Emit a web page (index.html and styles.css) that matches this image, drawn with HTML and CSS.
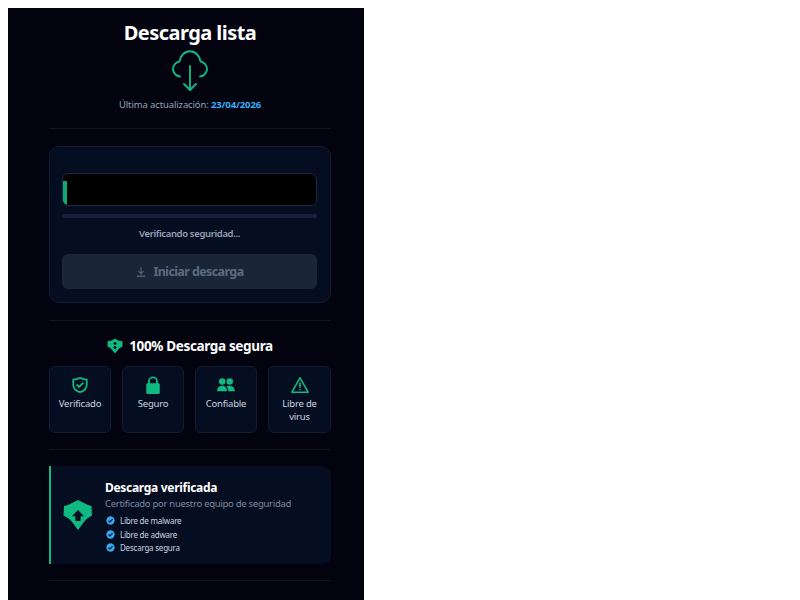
FILE: index.html
```html
<!DOCTYPE html>
<html lang="es">
<head>
    <meta charset="UTF-8">
    <meta name="viewport" content="width=device-width, initial-scale=1.0">
    <title>Descarga lista</title>
    <link rel="stylesheet" href="styles.css">
</head>
<body>

<div class="container">
    <h1>Descarga lista</h1>
    <svg class="cloud-icon" viewBox="0 0 36 42" fill="none" stroke="#10b981" stroke-width="1.9" stroke-linecap="round" stroke-linejoin="round">
        <path d="M8 26.500C4 26 1 22.800 1 19c0-3.800 2.800-7 6.500-7.500C8.200 5.800 12.600 1.200 18 1.200s9.800 4.600 10.500 10.300C32.200 12 35 15.200 35 19c0 3.800-3 7-7 7.500"/>
        <path d="M18 16v24"/>
        <path d="M12 34l6 6 6-6"/>
    </svg>
    <p class="updated">Última actualización: <strong>23/04/2026</strong></p>

    <hr>

    <div class="download-card">
        <div class="ad-box">
            <div class="ad-fill"></div>
        </div>
        <div class="track"></div>
        <p class="status">Verificando seguridad...</p>
        <button class="start-btn" disabled>
            <svg viewBox="0 0 16 16" fill="none" stroke="#5d6b82" stroke-width="1.4" stroke-linecap="round" stroke-linejoin="round">
                <path d="M8 2v8"/>
                <path d="M4.800 7 8 10.200 11.200 7"/>
                <path d="M3 13.500h10"/>
            </svg>
            Iniciar descarga
        </button>
    </div>

    <hr class="card-end">

    <h2 class="safe-title">
        <svg viewBox="0 0 30 30">
            <path fill="#10b981" d="M15 1l6 3.500 8 1.500v10c-3.500 2-5 3-7 4.500L15 29l-7-8.500C6 19 4.500 18 1 16V6l8-1.500z"/>
            <circle fill="#02030f" cx="15" cy="10.500" r="2.600"/>
            <circle fill="#02030f" cx="15" cy="18" r="2.600"/>
        </svg>
        100% Descarga segura
    </h2>

    <div class="badges">
        <div class="badge">
            <svg viewBox="0 0 20 20" fill="none" stroke="#10b981" stroke-width="2" stroke-linecap="round" stroke-linejoin="round">
                <path d="M10 2c2.200 1.300 4.600 2 7.500 2.100v5.500c0 3.800-2.900 6.800-7.500 8.400-4.600-1.600-7.500-4.600-7.500-8.400V4.100C5.400 4 7.800 3.300 10 2z"/>
                <path d="M6.800 10l2.300 2.200 4.100-4.200"/>
            </svg>
            <span>Verificado</span>
        </div>
        <div class="badge">
            <svg viewBox="0 0 20 20">
                <path fill="none" stroke="#10b981" stroke-width="2" d="M5.500 9V6a4.500 4.500 0 0 1 9 0v3"/>
                <rect fill="#10b981" x="2.500" y="8" width="15" height="12" rx="1.500"/>
            </svg>
            <span>Seguro</span>
        </div>
        <div class="badge">
            <svg viewBox="0 0 20 20" fill="#10b981">
                <circle cx="5.800" cy="6" r="3.600"/>
                <circle cx="14.200" cy="6" r="3.600"/>
                <path d="M0 17c0-4 2.400-6.300 5.800-6.300 3.200 0 5.400 2.300 5.400 6.300z"/>
                <path d="M12.500 17c0-2.400-.6-4.400-1.800-5.700.9-.4 2-.6 3.200-.6 3.400 0 6.100 2.300 6.100 6.300z"/>
            </svg>
            <span>Confiable</span>
        </div>
        <div class="badge">
            <svg viewBox="0 0 20 20" fill="none" stroke="#10b981" stroke-width="1.800" stroke-linejoin="round" stroke-linecap="round">
                <path d="M10 2 19 18H1z"/>
                <path d="M10 8v4.500"/>
                <path d="M10 15v.1"/>
            </svg>
            <span>Libre de virus</span>
        </div>
    </div>

    <hr class="badges-end">

    <div class="verified-card">
        <svg class="verified-icon" viewBox="0 0 30 30">
            <path fill="#10b981" d="M15 0l10 5 3.500 1 .5 9.500c-3.500 2-6 3.500-8 6.500L15 30 9 22c-2-3-4.500-4.500-8.500-6.500L1 6l4-1z"/>
            <path fill="#050d20" d="M15 10l6 6.200h-3.400V21h-5.200v-4.800H9z"/>
        </svg>
        <div class="verified-text">
            <h3>Descarga verificada</h3>
            <p>Certificado por nuestro equipo de seguridad</p>
            <ul>
                <li><svg viewBox="0 0 10 10"><circle cx="5" cy="5" r="4.600" fill="#38a7ee"/><path d="M2.800 5.100l1.600 1.500 2.900-3" fill="none" stroke="#050d20" stroke-width="1.200"/></svg>Libre de malware</li>
                <li><svg viewBox="0 0 10 10"><circle cx="5" cy="5" r="4.600" fill="#38a7ee"/><path d="M2.800 5.100l1.600 1.500 2.900-3" fill="none" stroke="#050d20" stroke-width="1.200"/></svg>Libre de adware</li>
                <li><svg viewBox="0 0 10 10"><circle cx="5" cy="5" r="4.600" fill="#38a7ee"/><path d="M2.800 5.100l1.600 1.500 2.900-3" fill="none" stroke="#050d20" stroke-width="1.200"/></svg>Descarga segura</li>
            </ul>
        </div>
    </div>

    <hr>
</div>

</body>
</html>
```

FILE: styles.css
```css
html {
    overflow: hidden;
}

body {
    font-family: "Noto Sans", "Open Sans", sans-serif;
    margin: 8px;
    background-color: #ffffff;
}

.container {
    width: 356px;
    box-sizing: border-box;
    min-height: 640px;
    padding: 13px 33px 0 41px;
    background-color: #02030f;
    color: #ffffff;
    text-align: center;
}

h1 {
    margin: 0;
    font-size: 20px;
    line-height: 24px;
    font-weight: 700;
    letter-spacing: -0.55px;
}

.cloud-icon {
    display: block;
    width: 36px;
    height: 42px;
    margin: 5px auto 0;
}

.updated {
    margin: 6px 0 0;
    font-size: 9.500px;
    line-height: 14px;
    color: #94a3b8;
    letter-spacing: -0.13px;
}

.updated strong {
    color: #38b0f8;
}

hr {
    height: 1px;
    margin: 16px 0 17px;
    border: none;
    background-color: #0d1526;
}

hr.card-end {
    margin: 17px 0 16px;
}

hr.badges-end {
    margin-bottom: 16px;
}

.download-card {
    height: 157px;
    box-sizing: border-box;
    padding: 26px 13px 0 12px;
    background-color: #050d20;
    border: 1px solid #101c31;
    border-radius: 10px;
}

.ad-box {
    height: 33px;
    box-sizing: border-box;
    padding-top: 7px;
    background-color: #000000;
    border: 1px solid #1e293b;
    border-radius: 6px;
    overflow: hidden;
}

.ad-fill {
    width: 4px;
    height: 24px;
    background-color: #10a878;
    border-radius: 0 0 0 4px;
}

.track {
    height: 4px;
    margin-top: 8px;
    background-color: #16223a;
    border-radius: 2px;
}

.status {
    margin: 9px 0 0;
    font-size: 9.500px;
    line-height: 14px;
    font-weight: 600;
    color: #94a3b8;
    letter-spacing: -0.35px;
}

.start-btn {
    display: flex;
    justify-content: center;
    align-items: center;
    gap: 6px;
    width: 100%;
    height: 35px;
    margin-top: 13px;
    padding: 0;
    background-color: #1a2537;
    border: none;
    border-radius: 6px;
    color: #5d6b82;
    font-family: inherit;
    font-size: 12.500px;
    font-weight: 700;
    letter-spacing: -0.6px;
}

.start-btn svg {
    width: 12px;
    height: 12px;
}

.safe-title {
    display: flex;
    justify-content: center;
    align-items: center;
    gap: 6px;
    margin: 16px 0 11px;
    font-size: 13.500px;
    line-height: 18px;
    font-weight: 700;
    letter-spacing: -0.35px;
}

.safe-title svg {
    width: 16px;
    height: 16px;
}

.badges {
    display: grid;
    grid-template-columns: repeat(3, 62px) 63px;
    gap: 11px;
}

.badge {
    height: 67px;
    box-sizing: border-box;
    padding: 9px 4px 0;
    background-color: #050d20;
    border: 1px solid #101c31;
    border-radius: 6px;
    font-size: 9.500px;
    line-height: 13px;
    color: #cbd5e1;
    letter-spacing: -0.2px;
}

.badge svg {
    display: block;
    width: 18px;
    height: 18px;
    margin: 0 auto 3px;
}

.verified-card {
    display: flex;
    align-items: center;
    gap: 12px;
    height: 98px;
    box-sizing: border-box;
    padding-left: 12px;
    background-color: #050d20;
    border-left: 2px solid #10b981;
    border-radius: 0 8px 8px 0;
    text-align: left;
}

.verified-icon {
    width: 30px;
    height: 30px;
    flex-shrink: 0;
}

.verified-text {
    padding-top: 3px;
}

.verified-text h3 {
    margin: 0;
    font-size: 12px;
    line-height: 17px;
    font-weight: 700;
    letter-spacing: -0.3px;
}

.verified-text p {
    margin: 1px 0 3px;
    font-size: 9.500px;
    line-height: 14px;
    color: #7c8aa0;
    letter-spacing: -0.28px;
}

.verified-text ul {
    margin: 0;
    padding: 0;
    list-style: none;
}

.verified-text li {
    display: flex;
    align-items: center;
    gap: 5px;
    height: 13.500px;
    padding-left: 1px;
    font-size: 8px;
    color: #cbd5e1;
    letter-spacing: -0.22px;
}

.verified-text li svg {
    width: 9px;
    height: 9px;
}
```
